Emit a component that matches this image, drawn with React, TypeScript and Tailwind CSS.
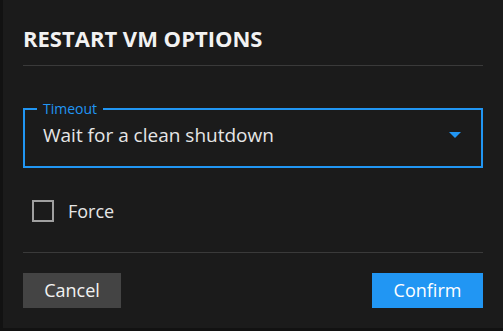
const font = { fontFamily: '"Open Sans", "Noto Sans", sans-serif' };

export default function App() {
  return (
    <div className="w-[503px] h-[331px] bg-[#121212] pl-[3px]" style={font}>
      <div className="w-[500px] h-[328px] bg-[#1b1b1b] px-[20px] flex flex-col">
        {/* Header */}
        <h2 className="mt-[23px] text-[22px] leading-[30px] font-bold text-[#f2f2f2]">
          RESTART VM OPTIONS
        </h2>
        <div className="mt-[12px] h-px bg-[#3a3a3a]" />

        {/* Timeout select */}
        <fieldset className="mt-[35px] h-[67px] border-2 border-[#2196f3] px-[12px] pb-[6px]">
          <legend className="px-[6px] text-[14px] leading-[16px] text-[#2196f3]">Timeout</legend>
          <div className="flex items-center justify-between pl-[6px] pr-[8px] pt-[5px]">
            <span className="text-[19px] leading-[26px] text-[#e6e6e6]">Wait for a clean shutdown</span>
            <span className="w-0 h-0 border-l-[6px] border-r-[6px] border-t-[6px] border-l-transparent border-r-transparent border-t-[#2196f3]" />
          </div>
        </fieldset>

        {/* Force checkbox */}
        <label className="mt-[32px] ml-[9px] flex items-center gap-[14px]">
          <span className="w-[22px] h-[22px] border-2 border-[#a0a0a0]" />
          <span className="text-[18px] leading-[22px] text-[#e6e6e6]">Force</span>
        </label>

        <div className="mt-[30px] h-px bg-[#3a3a3a]" />

        {/* Actions */}
        <div className="mt-[20px] flex justify-between">
          <button className="w-[98px] h-[35px] bg-[#444444] text-[18px] text-[#f2f2f2]">Cancel</button>
          <button className="w-[111px] h-[35px] bg-[#2196f3] text-[18px] text-white">Confirm</button>
        </div>
      </div>
    </div>
  );
}
